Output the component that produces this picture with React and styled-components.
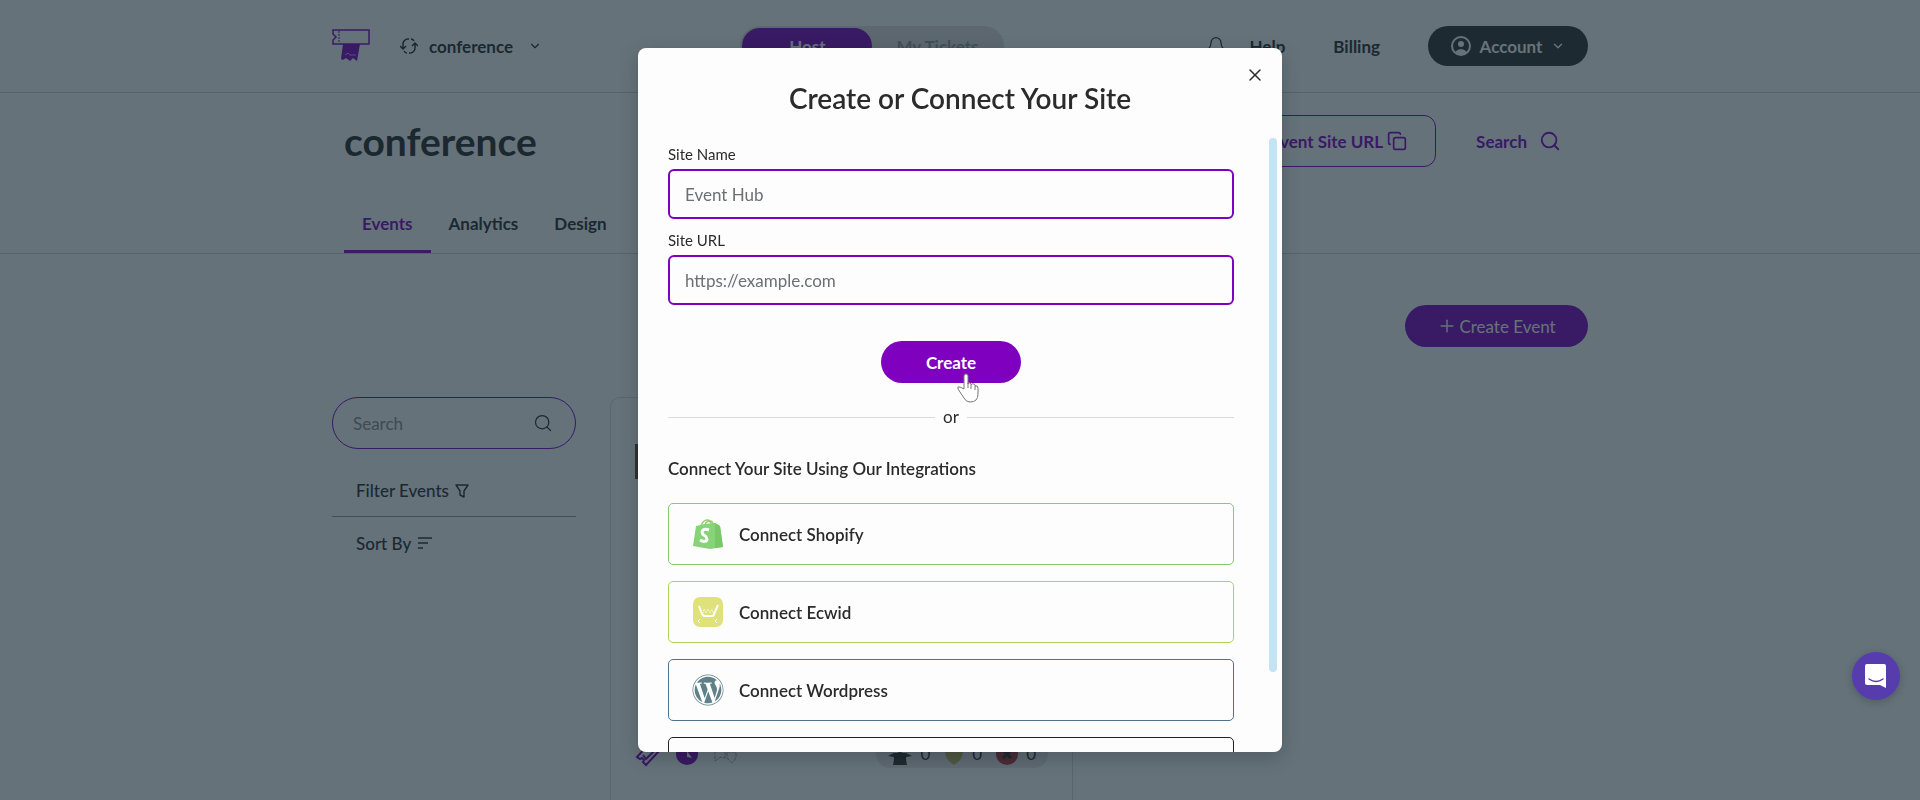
import React from 'react';
import styled, { createGlobalStyle } from 'styled-components';
import { Bell, ChevronDown, Copy, Plus, Search, X } from 'lucide-react';
import { FaWordpress } from 'react-icons/fa';

const GlobalStyle = createGlobalStyle`
	* {
		box-sizing: border-box;
	}
	body {
		margin: 0;
		background: #ffffff;
		color: #2b2b2b;
		font-family: Lato, 'Open Sans', sans-serif;
		font-size: 17px;
		overflow: hidden;
	}
	button, input {
		font: inherit;
		color: inherit;
	}
	button {
		padding: 0;
		border: 0;
		background: transparent;
		cursor: pointer;
	}
	a {
		color: inherit;
		text-decoration: none;
	}
`;

const Page = styled('div')`
	height: 100vh;
	overflow: hidden;
`;
const Container = styled('div')`
	width: 100%;
	max-width: 1256px;
	margin: 0 auto;
`;
const TopBar = styled('header')`
	border-bottom: 1px solid #d4d4d4;
`;
const TopBarInner = styled(Container)`
	display: grid;
	grid-template-columns: 7fr auto 10fr;
	align-items: center;
	height: 92px;
`;
const Brand = styled('div')`
	display: flex;
	align-items: center;
	gap: 30px;
`;
const SiteSwitcher = styled('button')`
	display: flex;
	align-items: center;
	gap: 11px;
	font-weight: 700;

	svg:last-child {
		margin-left: 4px;
	}
`;
const Toggle = styled('div')`
	display: flex;
	padding: 2px;
	border-radius: 20px;
	background: #e4dfe2;
`;
const ToggleButton = styled('button')`
	width: 130px;
	height: 36px;
	border-radius: 18px;
	font-weight: 700;
	background: ${({ $active }) => ($active ? '#7f00bf' : 'transparent')};
	color: ${({ $active }) => ($active ? '#ffffff' : '#9a9a9a')};
`;
const TopNav = styled('nav')`
	display: flex;
	align-items: center;
	justify-content: flex-end;
	gap: 48px;
	font-weight: 700;
`;
const BellButton = styled('button')`
	display: flex;
	margin-right: -24px;
`;
const AccountButton = styled('button')`
	display: flex;
	align-items: center;
	justify-content: center;
	gap: 9px;
	width: 160px;
	height: 40px;
	border-radius: 20px;
	background: #332f2c;
	color: #ffffff;
	font-weight: 700;
`;
const SiteHeader = styled('section')`
	border-bottom: 1px solid #d4d4d4;
`;
const SiteHeaderInner = styled(Container)`
	display: flex;
	flex-direction: column;
	justify-content: space-between;
	height: 160px;
	padding: 22px 12px 0;
`;
const TitleRow = styled('div')`
	display: flex;
	align-items: center;
	justify-content: space-between;
`;
const SiteTitle = styled('h1')`
	margin: 0;
	font-size: 39px;
	line-height: 48px;
	font-weight: 700;
`;
const TitleActions = styled('div')`
	display: flex;
	align-items: center;
	gap: 40px;
	padding-right: 15px;
	color: #7f00bf;
	font-weight: 700;
`;
const CopyUrlButton = styled('button')`
	display: flex;
	align-items: center;
	gap: 4px;
	height: 52px;
	padding: 0 28px;
	border: 1px solid #7f00bf;
	border-radius: 12px;
`;
const SearchButton = styled('button')`
	display: flex;
	align-items: center;
	gap: 12px;
`;
const Tabs = styled('nav')`
	display: flex;
`;
const Tab = styled('a')`
	padding: 0 18px 16px;
	border-bottom: 3px solid ${({ $active }) => ($active ? '#7f00bf' : 'transparent')};
	color: ${({ $active }) => ($active ? '#7f00bf' : 'inherit')};
	line-height: 20px;
	font-weight: 700;
`;
const Content = styled(Container)`
	padding-top: 51px;
`;
const ContentActions = styled('div')`
	display: flex;
	justify-content: flex-end;
`;
const CreateEventButton = styled('button')`
	display: flex;
	align-items: center;
	justify-content: center;
	gap: 2px;
	width: 183px;
	height: 42px;
	border-radius: 21px;
	background: #7f00bf;
	color: #ffffff;
`;
const Columns = styled('div')`
	display: grid;
	grid-template-columns: 244px 463px;
	gap: 34px;
	margin-top: 50px;
`;
const SearchField = styled('label')`
	display: flex;
	align-items: center;
	justify-content: space-between;
	height: 52px;
	padding: 0 22px 0 18px;
	border: 1px solid #7f00bf;
	border-radius: 26px;

	input {
		width: 140px;
		border: 0;
		outline: 0;
		background: transparent;
	}
	input::placeholder {
		color: #8d8d8d;
	}
`;
const FilterButton = styled('button')`
	display: flex;
	align-items: center;
	gap: 6px;
	width: 100%;
	height: 52px;
	padding-left: 24px;
	font-weight: 500;
	border-bottom: ${({ $divided }) => ($divided ? '1px solid #a09890' : '0')};
`;
const Filters = styled('div')`
	padding-top: 16px;
`;
const EventCard = styled('article')`
	display: flex;
	flex-direction: column;
	justify-content: space-between;
	height: 480px;
	padding: 46px 24px 108px 24px;
	border: 1px solid #dcdce2;
	border-radius: 10px;
`;
const Thumbnail = styled('div')`
	width: 120px;
	height: 35px;
	background: #6a4630;
`;
const CardFooter = styled('div')`
	display: flex;
	align-items: center;
	justify-content: space-between;
`;
const CardIcons = styled('div')`
	display: flex;
	align-items: center;
	gap: 15px;
`;
const Stats = styled('div')`
	display: flex;
	align-items: center;
	gap: 14px;
	padding: 0 12px;
	border-radius: 14px;
	background: #ece6ec;
`;
const Stat = styled('span')`
	display: flex;
	align-items: center;
	gap: 8px;
	line-height: 28px;
`;

const Overlay = styled('div')`
	position: fixed;
	inset: 0;
	display: flex;
	align-items: center;
	justify-content: center;
	padding: 48px 16px;
	background: rgba(20, 40, 52, 0.655);
`;
const Modal = styled('section')`
	display: flex;
	flex-direction: column;
	position: relative;
	width: 100%;
	max-width: 644px;
	height: 100%;
	border-radius: 8px;
	background: #fcfdfc;
	box-shadow: 0 6px 20px rgba(0, 0, 0, 0.2);
	overflow: hidden;
`;
const CloseButton = styled('button')`
	position: absolute;
	top: 17px;
	right: 17px;
	display: flex;
`;
const ModalTitle = styled('h2')`
	margin: 0;
	padding: 32px 0 22px;
	font-size: 28px;
	line-height: 36px;
	font-weight: 600;
	text-align: center;
`;
const ModalBody = styled('div')`
	display: flex;
	flex: 1;
	min-height: 0;
	padding: 0 5px 0 30px;
	gap: 35px;
`;
const ScrollArea = styled('div')`
	flex: 1;
	overflow: hidden;
`;
const ScrollThumb = styled('div')`
	width: 8px;
	height: 87%;
	border-radius: 4px;
	background: #c4e3f3;
`;
const Field = styled('div')`
	display: flex;
	flex-direction: column;
	gap: 5px;
	padding-bottom: 5px;

	label {
		padding-top: 6px;
		font-size: 15px;
		line-height: 20px;
	}
	input {
		height: 50px;
		padding: 0 15px;
		border: 2px solid #7f00bf;
		border-radius: 6px;
		background: transparent;
		outline: 0;
	}
	input::placeholder {
		color: #6c6f74;
		opacity: 1;
	}
`;
const SubmitRow = styled('div')`
	display: flex;
	justify-content: center;
	padding: 31px 0 24px;
`;
const SubmitButton = styled('button')`
	position: relative;
	width: 140px;
	height: 42px;
	border-radius: 21px;
	background: #7f00bf;
	color: #ffffff;
	font-weight: 700;
`;
const Pointer = styled('svg')`
	position: absolute;
	top: 31px;
	left: 75px;
`;
const Divider = styled('div')`
	display: flex;
	align-items: center;
	gap: 8px;
	line-height: 20px;

	&::before, &::after {
		content: '';
		flex: 1;
		height: 1px;
		background: #d9dcdc;
	}
`;
const IntegrationsTitle = styled('h3')`
	margin: 0;
	padding: 32px 0 24px;
	font-size: 17px;
	line-height: 20px;
	font-weight: 600;
`;
const Integrations = styled('div')`
	display: flex;
	flex-direction: column;
	gap: 16px;
`;
const IntegrationButton = styled('button')`
	display: flex;
	align-items: center;
	gap: 15px;
	height: 62px;
	padding: 0 23px;
	border: 1px solid ${({ $color }) => $color};
	border-radius: 5px;
	font-weight: 600;
`;
const ChatButton = styled('button')`
	position: fixed;
	right: 20px;
	bottom: 100px;
	display: flex;
	align-items: center;
	justify-content: center;
	width: 48px;
	height: 48px;
	border-radius: 50%;
	background: #573cad;
	box-shadow: 0 2px 8px rgba(0, 0, 0, 0.2);
`;

const Logo = () => (
	<svg width="38" height="34" viewBox="0 0 38 34" fill="none">
		<path d="M1 1h36v14H1v-4l3-3-3-3z" stroke="#7f00bf" strokeWidth="1.5" />
		<path d="M7 2v12" stroke="#7f00bf" strokeDasharray="2 1" />
		<path d="M11 15h17l-3 17-4-3-3 3-4-3-3 2-2-1z" fill="#7f00bf" />
		<path d="M13 26l3-2 2 2h6" stroke="#c9a0dd" />
	</svg>
);

const SwitchIcon = () => (
	<svg width="18" height="16" viewBox="0 0 18 16" fill="none" stroke="currentColor" strokeWidth="1.5">
		<path d="M9 1H8a5 5 0 0 0-5 5v5M0 8l3 3 3-3" />
		<path d="M9 15h1a5 5 0 0 0 5-5V5M12 8l3-3 3 3" />
		<path d="M11 1q2 0 3 2M4 13q1 2 3 2" />
	</svg>
);

const AccountIcon = () => (
	<svg width="20" height="20" viewBox="0 0 20 20" fill="none">
		<circle cx="10" cy="10" r="9" stroke="currentColor" strokeWidth="2" />
		<circle cx="10" cy="8" r="3" fill="currentColor" />
		<path d="M4 16q6-6 12 0-6 6-12 0z" fill="currentColor" />
	</svg>
);

const FunnelIcon = () => (
	<svg width="14" height="14" viewBox="0 0 14 14" fill="none" stroke="currentColor" strokeWidth="1.4">
		<path d="M1 1h12L9 7v6L5 11V7z" strokeLinejoin="round" />
	</svg>
);

const SortIcon = () => (
	<svg width="16" height="12" viewBox="0 0 16 12" stroke="currentColor" strokeWidth="1.6">
		<path d="M1 1h14M1 6h10M1 11h5" />
	</svg>
);

const TicketIcon = () => (
	<svg width="26" height="26" viewBox="0 0 26 26" fill="none" stroke="#7f00bf" strokeWidth="2">
		<path d="M2 16L15 2l9 8-13 14-3-3 1-2-2-2-2 1z" />
		<path d="M8 14l3 4 9-9" />
	</svg>
);

const PointerBadge = () => (
	<svg width="22" height="22" viewBox="0 0 22 22">
		<circle cx="11" cy="11" r="11" fill="#7f00bf" />
		<path d="M11 8l5 7-5-1z" fill="#ffffff" />
	</svg>
);

const ChatsIcon = () => (
	<svg width="24" height="20" viewBox="0 0 24 20" fill="none" stroke="#a5a5a5">
		<path d="M2 2h10v12l-4-1-6 4zM14 8h9v6l-4 5-5-5z" strokeDasharray="4 1" />
	</svg>
);

const PeopleIcon = () => (
	<svg width="24" height="24" viewBox="0 0 24 24" fill="#332f2c">
		<circle cx="12" cy="6" r="5" />
		<path d="M6 11h12l6 3-6 1q0 4 1 8H5q1-4 1-8l-6-1z" />
	</svg>
);

const ShopifyIcon = () => (
	<svg width="32" height="32" viewBox="0 0 32 32" fill="none">
		<path d="M9 8q2-6 6-6t4 5M13 7q1-4 5-4 3 0 3 4" stroke="#93cf6c" strokeWidth="1.5" />
		<path d="M4 8l9-2 10-1 5 3 3 21-13 2-17-3z" fill="#86d477" />
		<path d="M23 5l5 3 3 21-8 1z" fill="#79c768" />
		<path d="M17 12q-6-2-7 2c0 4 5 3 5 7 0 3-4 3-7 1" stroke="#ffffff" strokeWidth="3" />
	</svg>
);

const EcwidIcon = () => (
	<svg width="32" height="32" viewBox="0 0 32 32" fill="none">
		<rect x="1" y="1" width="30" height="30" rx="7" fill="#dfe17a" />
		<path d="M7 10l3 8q1 2 3 2h7q2 0 2-2l4-9" stroke="#ffffff" strokeWidth="2" />
		<path d="M11 17l1-4 2 4 2-4 2 4 2-4 1 4" stroke="#ffffff" strokeDasharray="1 1" />
		<path d="M8 23l-2 2 2 2M25 23l-2 2 2 2" stroke="#ffffff" />
	</svg>
);

const ChatIcon = () => (
	<svg width="24" height="26" viewBox="0 0 24 26" fill="none">
		<path d="M3 1h17q2 0 2 2v22l-6-3H3q-2 0-2-2V3q0-2 2-2z" fill="#ffffff" />
		<path d="M5 16q7 5 14 0" stroke="#573cad" strokeWidth="1.5" strokeLinecap="round" />
	</svg>
);

const HandPointer = () => (
	<Pointer width="24" height="32" viewBox="0 0 24 32" fill="#ffffff" stroke="#777777" aria-hidden="true">
		<path d="M8 17V4q0-2 2-2t2 2v8q0-2 2-1t1 2q1-2 3-1t1 2q3-1 3 2v6q0 8-8 8-4 0-6-4l-6-9q-1-3 2-2z" />
		<path d="M12 11v5M15 13v4M19 14v4" />
	</Pointer>
);

const integrations = [
	{ name: 'Connect Shopify', color: '#86c96f', icon: <ShopifyIcon /> },
	{ name: 'Connect Ecwid', color: '#aed457', icon: <EcwidIcon /> },
	{ name: 'Connect Wordpress', color: '#50718a', icon: <FaWordpress size={32} color="#5f8088" /> },
];

const CreateSiteModal = () => (
	<Overlay>
		<Modal role="dialog" aria-labelledby="modal-title">
			<CloseButton aria-label="Close">
				<X size={20} strokeWidth={1.75} />
			</CloseButton>
			<ModalTitle id="modal-title">Create or Connect Your Site</ModalTitle>
			<ModalBody>
				<ScrollArea>
					<Field>
						<label htmlFor="site-name">Site Name</label>
						<input id="site-name" type="text" placeholder="Event Hub" />
					</Field>
					<Field>
						<label htmlFor="site-url">Site URL</label>
						<input id="site-url" type="url" placeholder="https://example.com" />
					</Field>
					<SubmitRow>
						<SubmitButton type="submit">
							Create
							<HandPointer />
						</SubmitButton>
					</SubmitRow>
					<Divider>or</Divider>
					<IntegrationsTitle>Connect Your Site Using Our Integrations</IntegrationsTitle>
					<Integrations>
						{integrations.map(({ name, color, icon }) => (
							<IntegrationButton key={name} $color={color}>
								{icon}
								{name}
							</IntegrationButton>
						))}
						<IntegrationButton $color="#222222" aria-label="Connect another site" />
					</Integrations>
				</ScrollArea>
				<ScrollThumb />
			</ModalBody>
		</Modal>
	</Overlay>
);

const App = () => (
	<>
		<GlobalStyle />
		<Page>
			<TopBar>
				<TopBarInner>
					<Brand>
						<Logo />
						<SiteSwitcher>
							<SwitchIcon />
							conference
							<ChevronDown size={14} />
						</SiteSwitcher>
					</Brand>
					<Toggle>
						<ToggleButton $active>Host</ToggleButton>
						<ToggleButton>My Tickets</ToggleButton>
					</Toggle>
					<TopNav>
						<BellButton aria-label="Notifications">
							<Bell size={20} strokeWidth={1.5} />
						</BellButton>
						<a href="#help">Help</a>
						<a href="#billing">Billing</a>
						<AccountButton>
							<AccountIcon />
							Account
							<ChevronDown size={14} strokeWidth={2.5} />
						</AccountButton>
					</TopNav>
				</TopBarInner>
			</TopBar>
			<SiteHeader>
				<SiteHeaderInner>
					<TitleRow>
						<SiteTitle>conference</SiteTitle>
						<TitleActions>
							<CopyUrlButton>
								Copy Event Site URL
								<Copy size={20} />
							</CopyUrlButton>
							<SearchButton>
								Search
								<Search size={22} />
							</SearchButton>
						</TitleActions>
					</TitleRow>
					<Tabs>
						<Tab href="#events" $active>Events</Tab>
						<Tab href="#analytics">Analytics</Tab>
						<Tab href="#design">Design</Tab>
					</Tabs>
				</SiteHeaderInner>
			</SiteHeader>
			<Content>
				<ContentActions>
					<CreateEventButton>
						<Plus size={20} strokeWidth={1.75} />
						Create Event
					</CreateEventButton>
				</ContentActions>
				<Columns>
					<aside>
						<SearchField>
							<input type="search" placeholder="Search" aria-label="Search events" />
							<Search size={20} strokeWidth={1.5} />
						</SearchField>
						<Filters>
							<FilterButton $divided>
								Filter Events
								<FunnelIcon />
							</FilterButton>
							<FilterButton>
								Sort By
								<SortIcon />
							</FilterButton>
						</Filters>
					</aside>
					<EventCard>
						<Thumbnail />
						<CardFooter>
							<CardIcons>
								<TicketIcon />
								<PointerBadge />
								<ChatsIcon />
							</CardIcons>
							<Stats>
								<Stat>
									<PeopleIcon />0
								</Stat>
								<Stat>
									<svg width="20" height="22" viewBox="0 0 20 22">
										<path d="M1 8h18q0 9-9 14Q1 17 1 8z" fill="#c2b25c" />
									</svg>
									0
								</Stat>
								<Stat>
									<svg width="22" height="22" viewBox="0 0 22 22">
										<circle cx="11" cy="11" r="11" fill="#b0353c" />
										<path d="M7 7l8 8M15 7l-8 8" stroke="#332f2c" strokeWidth="3" />
									</svg>
									0
								</Stat>
							</Stats>
						</CardFooter>
					</EventCard>
				</Columns>
			</Content>
		</Page>
		<CreateSiteModal />
		<ChatButton aria-label="Open chat">
			<ChatIcon />
		</ChatButton>
	</>
);

export default App;
